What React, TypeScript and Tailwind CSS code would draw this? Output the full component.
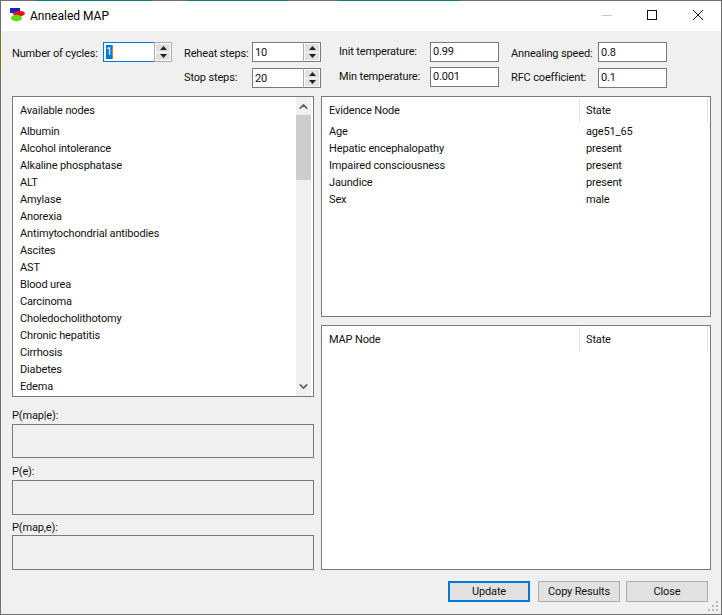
import { ChevronUp, ChevronDown } from "lucide-react";

const nodes = [
  "Albumin",
  "Alcohol intolerance",
  "Alkaline phosphatase",
  "ALT",
  "Amylase",
  "Anorexia",
  "Antimytochondrial antibodies",
  "Ascites",
  "AST",
  "Blood urea",
  "Carcinoma",
  "Choledocholithotomy",
  "Chronic hepatitis",
  "Cirrhosis",
  "Diabetes",
  "Edema",
];

const evidence = [
  ["Age", "age51_65"],
  ["Hepatic encephalopathy", "present"],
  ["Impaired consciousness", "present"],
  ["Jaundice", "present"],
  ["Sex", "male"],
];

function AppIcon() {
  return (
    <svg width="16" height="16" viewBox="0 0 16 16" className="shrink-0">
      <rect x="0" y="0" width="10" height="5" fill="#1a1ae0" />
      <ellipse cx="9" cy="5.5" rx="6" ry="2.8" fill="#e81010" />
      <ellipse cx="6.5" cy="10" rx="5.5" ry="3.2" fill="#5fd91c" />
    </svg>
  );
}

function Spinner({ frame }: { frame: string }) {
  return (
    <div className={`flex h-[20px] w-[18px] shrink-0 flex-col gap-px border bg-white p-px ${frame}`}>
      <div className="flex flex-1 items-center justify-center bg-[#e1e1e1]">
        <svg width="7" height="4" viewBox="0 0 7 4"><path d="M3.5 0 7 4H0z" fill="#222" /></svg>
      </div>
      <div className="flex flex-1 items-center justify-center bg-[#e1e1e1]">
        <svg width="7" height="4" viewBox="0 0 7 4"><path d="M0 0h7L3.5 4z" fill="#222" /></svg>
      </div>
    </div>
  );
}

function SpinBox({ value }: { value: string }) {
  return (
    <div className="flex h-[20px] w-[69px] items-stretch border border-[#7a7a7a] bg-white">
      <span className="flex-1 pl-[2px] leading-[20px]">{value}</span>
      <div className="-my-px -mr-px"><Spinner frame="border-[#7a7a7a] border-l-[#acacac]" /></div>
    </div>
  );
}

function TextBox({ value, lower }: { value: string; lower?: boolean }) {
  return (
    <div className={`h-[20px] w-[69px] border border-[#7a7a7a] bg-white pl-[2px] ${lower ? "leading-[20px]" : "leading-[18px]"}`}>
      {value}
    </div>
  );
}

function ResultBox({ label, labelClass, boxClass }: { label: string; labelClass: string; boxClass: string }) {
  return (
    <div>
      <div className={labelClass}>{label}</div>
      <div className={`border border-[#7a7a7a] bg-[#f0f0f0] ${boxClass}`} />
    </div>
  );
}

function ListHeader({ first, second }: { first: string; second: string }) {
  return (
    <div className="flex h-[26px] items-center">
      <div className="w-[257px] translate-y-px pl-[7px]">{first}</div>
      <div className="flex h-[25px] flex-1 items-center border-l border-[#e5e5e5] pl-[6px]">
        <span className="flex-1 translate-y-px">{second}</span>
        <span className="mr-[2px] h-[25px] border-r border-[#e5e5e5]" />
      </div>
    </div>
  );
}

export default function App() {
  return (
    <div className="relative h-[615px] w-[722px] overflow-hidden whitespace-nowrap bg-white text-[11px] tracking-[-0.15px] text-[#111] [font-family:Roboto,sans-serif]">
      <div className="flex h-[615px] flex-col border border-[#6f6f6f] bg-[#f0f0f0]">
        {/* Title bar */}
        <div className="flex h-[30px] shrink-0 items-center bg-white pl-[9px]">
          <AppIcon />
          <span className="ml-[4px] flex-1 text-[12px] tracking-normal text-[#000]">Annealed MAP</span>
          <div className="flex items-center">
            <svg width="46" height="30" viewBox="0 0 46 30"><path d="M19 14.5h10" stroke="#c8c8c8" /></svg>
            <svg width="46" height="30" viewBox="0 0 46 30"><rect x="18.5" y="9.5" width="9" height="9" fill="none" stroke="#111" /></svg>
            <svg width="46" height="30" viewBox="0 0 46 30"><path d="M18 9l10 10M28 9L18 19" stroke="#111" /></svg>
          </div>
        </div>

        {/* Settings */}
        <div className="flex items-start pl-[11px] pt-[11px]">
          <div className="flex w-[172px] items-center">
            <span className="w-[91px] translate-y-[2px]">Number of cycles:</span>
            <div className="flex h-[20px] w-[69px] items-center border border-[#0078d7] bg-white">
              <span className="ml-[2px] flex-1">
                <span className="block h-[14px] w-[7px] border-r border-[#e8791a] bg-[#0078d7] text-center leading-[14px] text-white">1</span>
              </span>
              <div className="-my-px -mr-px"><Spinner frame="border-[#acacac]" /></div>
            </div>
          </div>
          <div className="flex w-[155px] flex-col gap-[6px]">
            <div className="flex items-center">
              <span className="w-[68px] translate-y-[2px]">Reheat steps:</span>
              <SpinBox value="10" />
            </div>
            <div className="flex items-center">
              <span className="w-[68px]">Stop steps:</span>
              <SpinBox value="20" />
            </div>
          </div>
          <div className="flex w-[172px] flex-col gap-[5px]">
            <div className="flex items-center">
              <span className="w-[91px]">Init temperature:</span>
              <TextBox value="0.99" />
            </div>
            <div className="flex items-center">
              <span className="w-[91px]">Min temperature:</span>
              <TextBox value="0.001" />
            </div>
          </div>
          <div className="flex flex-col gap-[6px]">
            <div className="flex items-center">
              <span className="w-[87px] translate-y-[2px]">Annealing speed:</span>
              <TextBox value="0.8" lower />
            </div>
            <div className="flex items-center">
              <span className="w-[87px]">RFC coefficient:</span>
              <TextBox value="0.1" />
            </div>
          </div>
        </div>

        {/* Lists */}
        <div className="ml-[11px] mt-[8px] flex gap-[7px]">
          <div className="flex w-[302px] flex-col">
            <div className="flex h-[301px] overflow-hidden border border-[#7a7a7a] bg-white">
              <div className="flex-1 pl-[7px]">
                <div className="flex h-[26px] items-center pt-[2px]">Available nodes</div>
                {nodes.map((node) => (
                  <div key={node} className="h-[17px] leading-[17px]">{node}</div>
                ))}
              </div>
              <div className="mr-[2px] flex w-[15px] flex-col items-center bg-[#f0f0f0]">
                <ChevronUp size={13} strokeWidth={3} className="mt-[2px] h-[15px] text-[#606060]" />
                <div className="mt-[1px] h-[65px] w-full bg-[#cdcdcd]" />
                <div className="flex-1" />
                <ChevronDown size={13} strokeWidth={3} className="mb-[2px] h-[15px] text-[#606060]" />
              </div>
            </div>
            <ResultBox label="P(map|e):" labelClass="mt-[11px] h-[16px] leading-[16px]" boxClass="h-[34px]" />
            <ResultBox label="P(e):" labelClass="mt-[6px] h-[16px] leading-[16px]" boxClass="h-[35px]" />
            <ResultBox label="P(map,e):" labelClass="mt-[6px] h-[14px] leading-[14px]" boxClass="h-[35px]" />
          </div>

          <div className="flex w-[390px] flex-col gap-[8px]">
            <div className="h-[221px] border border-[#7a7a7a] bg-white">
              <ListHeader first="Evidence Node" second="State" />
              {evidence.map(([name, state]) => (
                <div key={name} className="flex h-[17px] leading-[17px]">
                  <span className="w-[257px] pl-[7px]">{name}</span>
                  <span className="pl-[7px]">{state}</span>
                </div>
              ))}
            </div>
            <div className="h-[245px] border border-[#7a7a7a] bg-white">
              <ListHeader first="MAP Node" second="State" />
            </div>
          </div>
        </div>

        {/* Buttons */}
        <div className="mt-[11px] flex justify-end pr-[13px]">
          <button className="h-[21px] w-[82px] border-2 border-[#0078d7] bg-[#e1e1e1] pt-px">Update</button>
          <button className="ml-[8px] h-[21px] w-[82px] border border-[#adadad] bg-[#e1e1e1] pt-px">Copy Results</button>
          <button className="ml-[6px] h-[21px] w-[82px] border border-[#adadad] bg-[#e1e1e1] pt-px">Close</button>
        </div>
      </div>

      {/* Resize grip */}
      <svg width="11" height="11" viewBox="0 0 11 11" className="absolute bottom-[3px] right-[3px]">
        <path d="M8 0h2v2H8zM4 4h2v2H4zM8 4h2v2H8zM0 8h2v2H0zM4 8h2v2H4zM8 8h2v2H8z" fill="#b8b8b8" />
      </svg>

      {/* Desktop colours showing through the window edge */}
      <div className="absolute left-[36px] top-0 h-px w-[116px] bg-[#0f7a7a]" />
      <div className="absolute left-[188px] top-0 h-px w-[100px] bg-[#0f7a7a]" />
      <div className="absolute left-[338px] top-0 h-px w-[122px] bg-[#0f7a7a]" />
      <div className="absolute left-0 top-[32px] h-[44px] w-px bg-[#7d7420]" />
    </div>
  );
}
